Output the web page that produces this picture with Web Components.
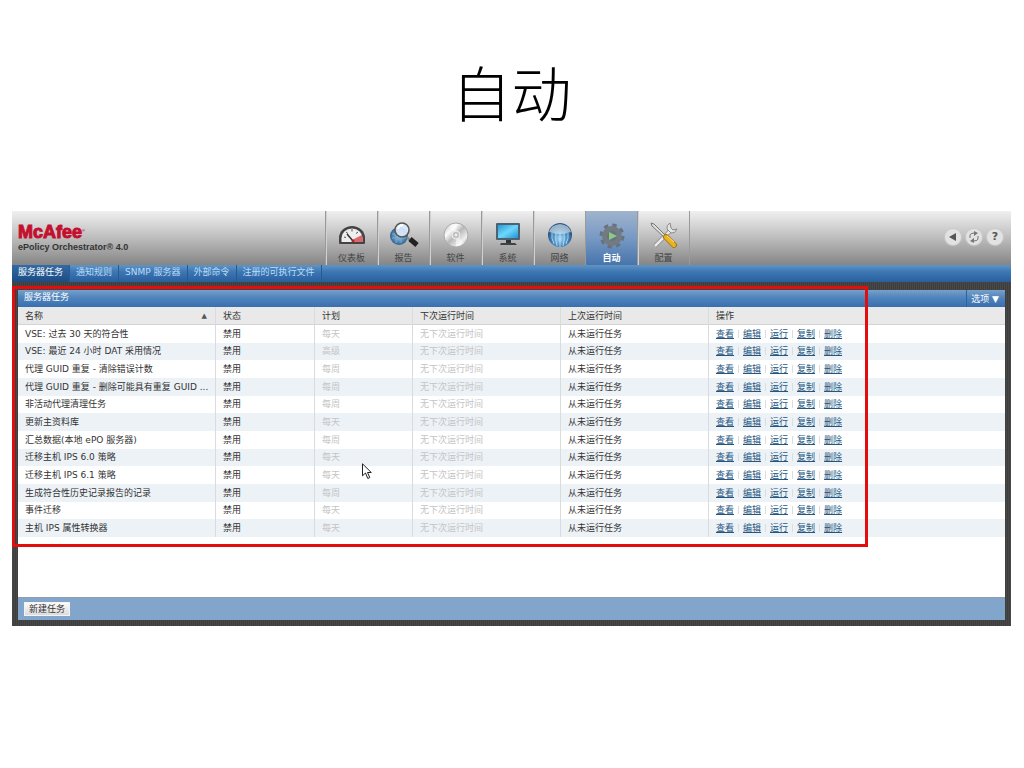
<!DOCTYPE html>
<html lang="zh-CN">
<head>
<meta charset="utf-8">
<title>自动</title>
<style>
	body {
		margin: 0;
		background: #fff;
		color: #333;
		font-family: "DejaVu Sans", "Noto Sans CJK SC", sans-serif;
		font-size: 9px;
		line-height: 12px;
	}
</style>
</head>
<body>
<slide-page>
	<span slot="title">自动</span>
	<epo-console></epo-console>
</slide-page>

<script>
// iconos de la barra superior, todos en un lienzo de 32x32
const ICONS = {
	gauge: `<path d="M3 23v-5a13 12 0 0 1 26 0v5q0 1-1 1H4q-1 0-1-1z" fill="#444"/>
		<path d="M5.500 22v-4a10.500 9.500 0 0 1 21 0v4z" fill="#eee"/>
		<path d="M16 20l10-5q1 3 .5 7h-8z" fill="#d9676b"/>
		<path d="M8 17l2 .5M10 12l2 1.500M16 9v2.500M22 12l-2 1.500" stroke="#555" stroke-width="1"/>
		<path d="M11 14l6 7" stroke="#333" stroke-width="1.500"/><circle cx="17" cy="21" r="1.500" fill="#a22"/>`,
	report: `<defs><radialGradient id="b"><stop offset="0" stop-color="#a9d1ee"/><stop offset="1" stop-color="#2b6293"/></radialGradient></defs>
		<circle cx="11" cy="16" r="9" fill="url(#b)"/><path d="M4 14h14M4 18h14M8 9v14M13 9v14" stroke="#77a8cf" stroke-width="1" fill="none"/>
		<path d="M19 17l4 4" stroke="#888" stroke-width="2"/><path d="M22 19l7 6" stroke="#222" stroke-width="5"/>
		<circle cx="14" cy="10" r="7" fill="#dceafb" fill-opacity=".9" stroke="#555" stroke-width="1.500"/><path d="M10 9q1-4 5-4" stroke="#fff" stroke-width="2" fill="none"/>`,
	disc: `<defs><linearGradient id="d" x2="1" y2="1"><stop offset="0" stop-color="#bbb"/><stop offset=".3" stop-color="#fafafa"/><stop offset=".5" stop-color="#b8b8b8"/><stop offset=".75" stop-color="#eee"/><stop offset="1" stop-color="#aaa"/></linearGradient></defs>
		<circle cx="16" cy="15" r="12" fill="url(#d)" stroke="#aaa" stroke-width="1"/><path d="M16 15L9 6q4-3 8-2zM16 15l8 8q-4 4-8 3z" fill="#fff" opacity=".5"/>
		<circle cx="16" cy="15" r="4" fill="#c8c8c8" stroke="#eee"/><circle cx="16" cy="15" r="2" fill="#eee" stroke="#999" stroke-width=".5"/>`,
	monitor: `<defs><linearGradient id="m" x2="1" y2="1"><stop offset="0" stop-color="#2499dc"/><stop offset=".5" stop-color="#6fd7fa"/><stop offset="1" stop-color="#2191d4"/></linearGradient></defs>
		<rect x="4" y="3" width="24" height="17" rx="1" fill="#4d6270"/><rect x="6" y="5" width="20" height="13" fill="url(#m)"/>
		<path d="M14 20h5v3h-5z" fill="#333"/><path d="M9 23h14l2 2H8z" fill="#39444b"/>`,
	globe: `<defs><radialGradient id="g" cy=".65"><stop offset="0" stop-color="#a5d9f5"/><stop offset=".6" stop-color="#4b91c6"/><stop offset="1" stop-color="#2d5987"/></radialGradient></defs>
		<circle cx="16" cy="15" r="12" fill="url(#g)"/><path d="M16 13v14M12 13q-1 7 1 13M20 13q1 7-1 13M8 13q-1 5 2 11M24 13q1 5-2 11" stroke="#cdeaf9" stroke-width="1" fill="none" opacity=".7"/>
		<path d="M5 12q2-7 11-8 9 1 11 8-11 4-22 0z" fill="#e5f1fa" opacity=".6"/>`,
	gear: `<circle cx="16" cy="16" r="10" fill="none" stroke="#69727b" stroke-width="5" stroke-dasharray="4 3.850"/>
		<circle cx="16" cy="16" r="10" fill="#727b83"/><circle cx="16" cy="16" r="5" fill="#68747b"/><path d="M13 12l8 4-8 4z" fill="#8cc886"/>`,
	tools: `<path d="M7 26L22 11" stroke="#888" stroke-width="4"/><path d="M7 26L22 11" stroke="#e8e8e8" stroke-width="2.500"/>
		<path d="M22 3q-4 2-3 6l4 4q4 1 6-4l-4 1-2-2z" fill="#e4e4e4" stroke="#888" stroke-width="1"/>
		<path d="M3 3l3 1 13 13-2 1L4 6z" fill="#ddd" stroke="#777" stroke-width="1"/>
		<path d="M18 17l8 8" stroke="#9b7a20" stroke-width="6" stroke-linecap="round"/><path d="M18 17l8 8" stroke="#eeb31c" stroke-width="4" stroke-linecap="round"/><path d="M19 16l7 6" stroke="#ffe47a" stroke-width="1"/>`
};

const ROUND = {
	back: `<path d="M11 4v8L4 8z" fill="#555"/>`,
	refresh: `<path d="M4 9V6q0-2 5-2M12 7v3q0 2-5 2" fill="none" stroke="#777" stroke-width="1"/><path d="M8 2l4 2-4 3zM8 9v5l-4-2z" fill="#777"/>`,
	help: ''
};

const TASKS = [
	['VSE: 过去 30 天的符合性', '每天'],
	['VSE: 最近 24 小时 DAT 采用情况', '高级'],
	['代理 GUID 重复 - 清除错误计数', '每周'],
	['代理 GUID 重复 - 删除可能具有重复 GUID ...', '每周'],
	['非活动代理清理任务', '每周'],
	['更新主资料库', '每天'],
	['汇总数据(本地 ePO 服务器)', '每周'],
	['迁移主机 IPS 6.0 策略', '每天'],
	['迁移主机 IPS 6.1 策略', '每天'],
	['生成符合性历史记录报告的记录', '每周'],
	['事件迁移', '每天'],
	['主机 IPS 属性转换器', '每天']
];

class SlidePage extends HTMLElement {
	constructor() {
		super();
		this.attachShadow({ mode: 'open' });
		this.shadowRoot.innerHTML = `
		<style>
		:host { display: block; padding: 53px 13px 0 12px; }
		h1 {
			margin: 0 0 70px;
			text-align: center;
			color: #000;
			font: 300 60px/88px "Liberation Serif", "Noto Sans CJK SC", serif;
		}
		</style>
		<h1><slot name="title"></slot></h1>
		<slot></slot>`;
	}
}

class EpoTool extends HTMLElement {
	connectedCallback() {
		this.attachShadow({ mode: 'open' });
		this.shadowRoot.innerHTML = `
		<style>
		:host { display: block; width: 52px; box-sizing: border-box; border-left: 1px solid #9a9a9a; box-shadow: inset 1px 0 #d0d0d0; }
		:host([active]) { background: linear-gradient(#a0b4cd, #7799c4 50%, #4774aa); box-shadow: none; }
		a { display: flex; flex-direction: column; align-items: center; padding-top: 9px; color: #444; text-decoration: none; }
		:host([active]) a { color: #fff; font-weight: bold; }
		svg { display: block; width: 32px; height: 32px; }
		</style>
		<a href="#"><svg viewBox="0 0 32 32">${ICONS[this.getAttribute('icon')]}</svg><slot></slot></a>`;
	}
}

class RoundButton extends HTMLElement {
	connectedCallback() {
		const icon = this.getAttribute('icon');
		this.attachShadow({ mode: 'open' });
		this.shadowRoot.innerHTML = `
		<style>
		:host { display: block; }
		button {
			display: grid; place-items: center;
			width: 16px; height: 16px; padding: 0; border: 0; border-radius: 50%;
			background: #e2e2e2; box-shadow: 0 0 1px 1px #c9c9c9;
			color: #555; font: bold 11px/16px "DejaVu Sans", sans-serif;
		}
		svg { width: 16px; height: 16px; }
		</style>
		<button aria-label="${this.getAttribute('label')}">${icon === 'help' ? '?' : `<svg viewBox="0 0 16 16">${ROUND[icon]}</svg>`}</button>`;
	}
}

class EpoHeader extends HTMLElement {
	constructor() {
		super();
		this.attachShadow({ mode: 'open' });
		this.shadowRoot.innerHTML = `
		<style>
		:host { display: flex; height: 54px; background: linear-gradient(#f0f0f0, #c2c2c2 45%, #858585); }
		.brand { flex: 0 0 307px; padding: 12px 0 0 6px; }
		.logo { color: #c4102f; font: bold 18px/19px "Liberation Sans", sans-serif; -webkit-text-stroke: 1px #c4102f; }
		.logo sup { font-size: 4px; line-height: 0; vertical-align: 6px; -webkit-text-stroke: 0; }
		.product { color: #333; font: bold 9px/10px "Liberation Sans", sans-serif; }
		.tools { display: flex; border-right: 1px solid #9a9a9a; }
		.round { display: flex; gap: 5px; margin-left: auto; padding: 18px 8px 0 0; }
		</style>
		<div class="brand">
			<div class="logo">McAfee<sup>®</sup></div>
			<div class="product">ePolicy Orchestrator® 4.0</div>
		</div>
		<div class="tools">
			<epo-tool icon="gauge">仪表板</epo-tool>
			<epo-tool icon="report">报告</epo-tool>
			<epo-tool icon="disc">软件</epo-tool>
			<epo-tool icon="monitor">系统</epo-tool>
			<epo-tool icon="globe">网络</epo-tool>
			<epo-tool icon="gear" active>自动</epo-tool>
			<epo-tool icon="tools">配置</epo-tool>
		</div>
		<div class="round">
			<round-button icon="back" label="后退"></round-button>
			<round-button icon="refresh" label="刷新"></round-button>
			<round-button icon="help" label="帮助"></round-button>
		</div>`;
	}
}

class EpoNav extends HTMLElement {
	constructor() {
		super();
		this.attachShadow({ mode: 'open' });
		this.shadowRoot.innerHTML = `
		<style>
		:host { display: block; background: linear-gradient(#5f94c6, #3d77b2 40%, #285f9f); }
		nav { display: flex; }
		a { padding: 1px 6px 4px; border-right: 1px solid #28598f; color: #b9dcfa; text-decoration: none; }
		a.on { background: linear-gradient(#326ba5, #1c4b84); color: #fff; }
		</style>
		<nav>
			<a class="on" href="#">服务器任务</a><a href="#">通知规则</a><a href="#">SNMP 服务器</a><a href="#">外部命令</a><a href="#">注册的可执行文件</a>
		</nav>`;
	}
}

class TaskTable extends HTMLElement {
	constructor() {
		super();
		this.attachShadow({ mode: 'open' });
	}

	connectedCallback() {
		this.render();
	}

	render() {
		const actions = ['查看', '编辑', '运行', '复制', '删除'].map(a => `<a href="#">${a}</a>`).join('<i></i>');
		const rows = TASKS.map(([name, plan]) => `
			<tr><td>${name}</td><td>禁用</td><td class="dim">${plan}</td><td class="dim">无下次运行时间</td><td>从未运行任务</td><td><div class="actions">${actions}</div></td></tr>`).join('');

		this.shadowRoot.innerHTML = `
		<style>
		:host { display: block; }
		table { width: 100%; height: 230px; table-layout: fixed; border-collapse: separate; border-spacing: 0; }
		th, td {
			padding: 0 0 0 7px; border-right: 1px solid #d9dbdd;
			text-align: left; font-weight: normal; white-space: nowrap;
		}
		th:last-child, td:last-child { border-right: 0; }
		th { height: 17px; background: #e9e9e9; border-bottom: 1px solid #d4d4d4; }
		tr:nth-child(even) td { background: #edf2f7; }
		.dim { color: #c4c4c4; }
		.sort { display: flex; justify-content: space-between; padding-right: 8px; }
		.arrow { color: #555; font-size: 7px; }
		.actions { display: flex; align-items: center; gap: 4px; }
		.actions a { color: #24567f; text-decoration: underline; }
		.actions i { width: 1px; height: 8px; background: #ddd; }
		</style>
		<table>
			<colgroup><col style="width:198px"><col style="width:99px"><col style="width:98px"><col style="width:148px"><col style="width:148px"><col></colgroup>
			<thead><tr><th><div class="sort"><span>名称</span><span class="arrow">▲</span></div></th><th>状态</th><th>计划</th><th>下次运行时间</th><th>上次运行时间</th><th>操作</th></tr></thead>
			<tbody>${rows}</tbody>
		</table>`;
	}
}

class TaskPanel extends HTMLElement {
	constructor() {
		super();
		this.attachShadow({ mode: 'open' });
		this.shadowRoot.innerHTML = `
		<style>
		:host { display: block; background: #fff; }
		header {
			display: flex; justify-content: space-between; align-items: stretch;
			height: 17px; padding-left: 6px;
			background: linear-gradient(#789fc9, #4f84bd 45%, #386fad);
			color: #fff;
		}
		h2 { margin: 0; font: inherit; line-height: 15px; }
		header button { padding: 0 6px 0 4px; border: 0; border-left: 1px solid #2f619a; background: none; color: #fff; font: inherit; }
		.body { min-height: 290px; }
		footer { padding: 4px 6px; border-top: 1px solid #8d9dae; background: #82a5cb; }
		footer button {
			display: block; padding: 0 4px; border: 1px solid #f3f3f3;
			background: linear-gradient(#fafafa, #dcdcdc); color: #333; font: inherit;
		}
		</style>
		<header><h2><slot name="title"></slot></h2><button>选项 ▼</button></header>
		<div class="body"><slot></slot></div>
		<footer><button>新建任务</button></footer>`;
	}
}

class EpoConsole extends HTMLElement {
	constructor() {
		super();
		this.attachShadow({ mode: 'open' });
		this.shadowRoot.innerHTML = `
		<style>
		:host { display: block; background: #444; }
		main {
			position: relative; padding: 8px 6px 6px;
			background: repeating-linear-gradient(90deg, #484848 0 1px, #3e3e3e 1px 2px);
		}
		.frame {
			position: absolute; top: 4px; left: 0; width: 856px; height: 261px;
			box-sizing: border-box; border: 3px solid #e30d0d; pointer-events: none;
		}
		.cursor { position: absolute; top: 181px; left: 350px; width: 10px; height: 17px; }
		</style>
		<epo-header></epo-header>
		<epo-nav></epo-nav>
		<main>
			<task-panel><span slot="title">服务器任务</span><task-table></task-table></task-panel>
			<div class="frame"></div>
			<svg class="cursor" viewBox="0 0 10 17"><path d="M.5 .8v12l3-2.800 2.300 5.500 2-1-2.300-5h3.800z" fill="#fff" stroke="#222" stroke-width="1"/></svg>
		</main>`;
	}
}

customElements.define('slide-page', SlidePage);
customElements.define('epo-tool', EpoTool);
customElements.define('round-button', RoundButton);
customElements.define('epo-header', EpoHeader);
customElements.define('epo-nav', EpoNav);
customElements.define('task-table', TaskTable);
customElements.define('task-panel', TaskPanel);
customElements.define('epo-console', EpoConsole);
</script>
</body>
</html>
